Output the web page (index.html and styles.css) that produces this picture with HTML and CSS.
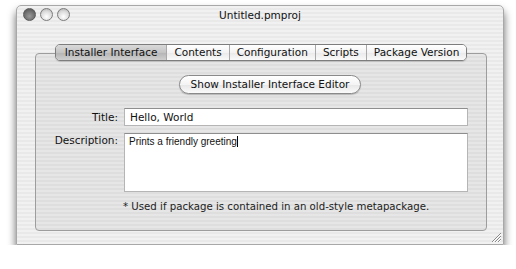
FILE: index.html
```html
<!DOCTYPE html>
<html lang="en">
<head>
  <meta charset="UTF-8">
  <title>Untitled.pmproj</title>
  <link rel="stylesheet" href="styles.css">
</head>
<body>

  <div class="window">
    <div class="titlebar">
      <div class="lights">
        <span class="light light--close"></span>
        <span class="light"></span>
        <span class="light"></span>
      </div>
      <div class="titlebar__title">Untitled.pmproj</div>
    </div>

    <div class="tabview">
      <div class="tabs">
        <div class="tab tab--selected">Installer Interface</div>
        <div class="tab">Contents</div>
        <div class="tab">Configuration</div>
        <div class="tab">Scripts</div>
        <div class="tab">Package Version</div>
      </div>

      <div class="tabbox">
        <div class="button-row">
          <div class="button">Show Installer Interface Editor</div>
        </div>

        <div class="form">
          <div class="form__label form__label--title">Title:</div>
          <div class="field">Hello, World</div>

          <div class="form__label form__label--desc">Description:</div>
          <div class="area">Prints a friendly greeting<span class="caret"></span></div>
        </div>

        <div class="note">* Used if package is contained in an old-style metapackage.</div>
      </div>
    </div>

    <svg class="grip" width="12" height="12" viewBox="0 0 12 12">
      <g stroke="#8a8a8a" stroke-width="1">
        <line x1="11" y1="2" x2="2" y2="11"/>
        <line x1="11" y1="5" x2="5" y2="11"/>
        <line x1="11" y1="8" x2="8" y2="11"/>
      </g>
      <g stroke="#ffffff" stroke-width="1">
        <line x1="11" y1="3" x2="3" y2="11"/>
        <line x1="11" y1="6" x2="6" y2="11"/>
        <line x1="11" y1="9" x2="9" y2="11"/>
      </g>
    </svg>
  </div>

</body>
</html>
```

FILE: styles.css
```css
body, html {
  margin: 0;
  overflow: hidden;
}

body {
  background: #ffffff;
  font-family: "DejaVu Sans", sans-serif;
  font-size: 10px;
  color: #111;
}

.window {
  position: relative;
  margin: 5px 0 0 16px;
  width: 488px;
  height: 240px;
  box-sizing: border-box;
  border: 1px solid #a8a8a8;
  border-radius: 5px 5px 0 0;
  background: repeating-linear-gradient(#f1f1f1 0 2px, #e9e9e9 2px 4px);
  box-shadow: 0 6px 8px rgba(0, 0, 0, 0.6);
}

.titlebar {
  position: relative;
  height: 17px;
  display: flex;
  align-items: center;
  justify-content: center;
}

.titlebar__title {
  font-size: 10.5px;
  color: #111;
  margin-top: 1px;
}

.lights {
  position: absolute;
  left: 6px;
  top: 2px;
  display: flex;
  gap: 4px;
}

.light {
  width: 11px;
  height: 11px;
  border-radius: 50%;
  border: 1px solid #7c7c7c;
  background: radial-gradient(circle at 50% 70%, #ffffff 0, #dcdcdc 55%, #a9a9a9 100%);
}

.light--close {
  border-color: #5a5a5a;
  background: radial-gradient(circle at 50% 65%, #9a9a9a 0, #6c6c6c 60%, #4a4a4a 100%);
}

.tabview {
  margin: 21px 0 0 18px;
  width: 452px;
}

.tabs {
  position: relative;
  z-index: 1;
  display: flex;
  width: max-content;
  margin: 0 auto -8px;
  height: 15px;
  border: 1px solid #7d7d7d;
  border-radius: 5px;
  overflow: hidden;
  box-shadow: 0 1px 1px rgba(0, 0, 0, 0.15);
}

.tab {
  padding: 0 7px;
  line-height: 15px;
  font-size: 10.5px;
  background: linear-gradient(#ffffff, #f3f3f3 50%, #e9e9e9 51%, #fafafa);
  border-left: 1px solid #a9a9a9;
}

.tab:first-child {
  border-left: none;
  padding: 0 9px;
}

.tab--selected {
  background: linear-gradient(#d9d9d9, #c4c4c4 50%, #b4b4b4 51%, #cfcfcf);
}

.tabbox {
  padding: 21px 0 0;
  box-sizing: border-box;
  height: 178px;
  border: 1px solid #9d9d9d;
  border-radius: 4px;
  background: repeating-linear-gradient(#e6e6e6 0 2px, #dedede 2px 4px);
}

.button-row {
  display: flex;
  justify-content: center;
  padding-left: 18px;
}

.button {
  height: 17px;
  line-height: 17px;
  padding: 0 11px;
  border: 1px solid #8a8a8a;
  border-radius: 10px;
  font-size: 10.5px;
  background: linear-gradient(#ffffff, #f4f4f4 50%, #e6e6e6 51%, #fbfbfb);
  box-shadow: 0 1px 1px rgba(0, 0, 0, 0.2);
}

.form {
  display: grid;
  grid-template-columns: 82px 344px;
  column-gap: 6px;
  row-gap: 7px;
  margin-top: 14px;
}

.form__label {
  text-align: right;
  font-size: 10.5px;
}

.form__label--title {
  line-height: 18px;
}

.form__label--desc {
  padding-top: 1px;
}

.field,
.area {
  box-sizing: border-box;
  background: #ffffff;
  border: 1px solid #b5b5b5;
  border-top-color: #8e8e8e;
}

.field {
  height: 18px;
  line-height: 16px;
  padding-left: 5px;
  font-size: 10.5px;
}

.area {
  height: 59px;
  padding: 2px 0 0 4px;
  font-family: "Liberation Sans", Arial, sans-serif;
  font-size: 10px;
}

.caret {
  display: inline-block;
  width: 1px;
  height: 11px;
  vertical-align: -2px;
  background: #000;
}

.note {
  margin: 9px 0 0 87px;
  font-size: 10.2px;
  color: #222;
}

.grip {
  position: absolute;
  right: 1px;
  bottom: 1px;
}
```
